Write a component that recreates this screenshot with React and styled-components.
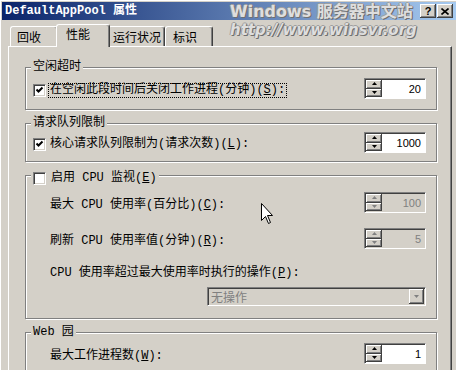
import React from 'react';
import styled, { createGlobalStyle } from 'styled-components';

const GlobalStyle = createGlobalStyle`
  html, body {
    margin: 0;
    padding: 0;
    background: #d4d0c8;
    overflow: hidden;
  }
  body {
    font-family: "Liberation Mono", "Noto Sans CJK SC", monospace;
    font-size: 12px;
    color: #000;
  }
`;

const Window = styled.div`
  position: relative;
  box-sizing: border-box;
  width: 456px;
  height: 370px;
  overflow: hidden;
  padding: 2px 0 0 2px;
  background: #d4d0c8;
  box-shadow: inset 1px 1px 0 #fff;
`;

const TitleBar = styled.div`
  display: flex;
  align-items: center;
  justify-content: space-between;
  height: 18px;
  padding: 0 3px;
  background: linear-gradient(to right, #0a246a, #a6caf0);
`;

const TitleText = styled.span`
  color: #fff;
  font-weight: bold;
  font-size: 12px;
  line-height: 14px;
`;

const TitleButtons = styled.div`
  display: flex;
  gap: 1px;
`;

const TitleButton = styled.div`
  display: flex;
  align-items: center;
  justify-content: center;
  box-sizing: border-box;
  width: 16px;
  height: 14px;
  background: #d4d0c8;
  box-shadow: inset -1px -1px 0 #404040, inset 1px 1px 0 #fff,
    inset -2px -2px 0 #808080;
  font-family: "Liberation Sans", sans-serif;
  font-weight: bold;
  font-size: 11px;
  line-height: 12px;
`;

const Body = styled.div`
  padding-left: 6px;
`;

const TabRow = styled.div`
  display: flex;
  align-items: flex-end;
  height: 22px;
  margin-top: 4px;
  padding-left: 2px;
`;

const Tab = styled.div`
  position: relative;
  z-index: ${(p) => (p.$active ? 2 : 1)};
  box-sizing: border-box;
  width: ${(p) => p.$w}px;
  height: ${(p) => (p.$active ? 23 : 20)}px;
  margin: 0 ${(p) => (p.$active ? -2 : 0)}px ${(p) => (p.$active ? -1 : 0)}px;
  padding: ${(p) => (p.$active ? '4px 0 0 9px' : '5px 0 0 ' + p.$pl + 'px')};
  background: #d4d0c8;
  border-top: 1px solid #fff;
  border-left: 1px solid #fff;
  border-right: 1px solid #404040;
  border-radius: 3px 3px 0 0;
  box-shadow: inset -1px 0 0 #808080;
  line-height: 14px;
  white-space: nowrap;
`;

const Panel = styled.div`
  box-sizing: border-box;
  display: flex;
  flex-direction: column;
  gap: 13px;
  width: 444px;
  height: 324px;
  overflow: hidden;
  padding: 20px 14px 0 16px;
  border-top: 1px solid #fff;
  border-left: 1px solid #fff;
  border-right: 1px solid #404040;
  box-shadow: inset -1px 0 0 #808080;
`;

const Group = styled.div`
  position: relative;
  flex-shrink: 0;
  box-sizing: border-box;
  height: ${(p) => p.$h}px;
  padding: ${(p) => p.$pad};
  border: 1px solid #808080;
  box-shadow: inset 1px 1px 0 #fff, 1px 1px 0 #fff;
  display: flex;
  flex-direction: ${(p) => (p.$column ? 'column' : 'row')};
  align-items: ${(p) => (p.$column ? 'stretch' : 'center')};
  justify-content: ${(p) => (p.$column ? 'flex-start' : 'space-between')};
`;

const Legend = styled.div`
  position: absolute;
  top: ${(p) => p.$top || -7}px;
  left: 5px;
  display: flex;
  align-items: center;
  gap: 5px;
  padding: 0 2px;
  background: #d4d0c8;
  line-height: 13px;
  white-space: nowrap;
`;

const CheckRow = styled.div`
  display: flex;
  align-items: center;
  gap: 3px;
  margin-top: 4px;
  white-space: nowrap;
`;

const Box = styled.span`
  display: inline-flex;
  align-items: center;
  justify-content: center;
  box-sizing: border-box;
  width: 13px;
  height: 13px;
  background: #fff;
  border: 1px solid;
  border-color: #808080 #fff #fff #808080;
  box-shadow: inset 1px 1px 0 #404040, inset -1px -1px 0 #d4d0c8;
`;

const Focus = styled.span`
  padding: 0 1px;
  outline: ${(p) => (p.$focus ? '1px dotted #000' : 'none')};
  line-height: 13px;
`;

const Row = styled.div`
  display: flex;
  align-items: center;
  justify-content: space-between;
  height: 21px;
  margin-top: ${(p) => p.$mt || 0}px;
  white-space: nowrap;
`;

const Caption = styled.div`
  margin-top: ${(p) => p.$mt || 0}px;
  line-height: 12px;
  white-space: nowrap;
`;

const Spinner = styled.div`
  display: flex;
  box-sizing: border-box;
  width: 62px;
  height: 21px;
  padding: 1px;
  border: 1px solid;
  border-color: #808080 #fff #fff #808080;
  box-shadow: inset 1px 1px 0 #404040;
  background: ${(p) => (p.$disabled ? '#d4d0c8' : '#fff')};
`;

const SpinButtons = styled.div`
  display: flex;
  flex-direction: column;
  width: 16px;
`;

const SpinButton = styled.div`
  flex: 1;
  display: flex;
  align-items: center;
  justify-content: center;
  background: #d4d0c8;
  box-shadow: inset -1px -1px 0 #404040, inset 1px 1px 0 #fff,
    inset -2px -2px 0 #808080;
`;

const SpinValue = styled.div`
  flex: 1;
  display: flex;
  align-items: center;
  justify-content: flex-end;
  padding-right: 3px;
  font-family: "Liberation Sans", sans-serif;
  font-size: 11px;
  color: ${(p) => (p.$disabled ? '#808080' : '#000')};
`;

const Select = styled.div`
  align-self: flex-end;
  display: flex;
  align-items: center;
  justify-content: space-between;
  box-sizing: border-box;
  width: 219px;
  height: 19px;
  margin-top: 8px;
  padding: 1px 1px 1px 3px;
  border: 1px solid;
  border-color: #808080 #fff #fff #808080;
  box-shadow: inset 1px 1px 0 #404040;
  background: #d4d0c8;
  color: #808080;
`;

const SelectButton = styled.div`
  display: flex;
  align-items: center;
  justify-content: center;
  width: 15px;
  height: 15px;
  background: #d4d0c8;
  box-shadow: inset -1px -1px 0 #404040, inset 1px 1px 0 #fff,
    inset -2px -2px 0 #808080;
`;

const Watermark = styled.div`
  position: absolute;
  left: 230px;
  top: 2px;
  pointer-events: none;
  color: #dedede;
  font-family: "DejaVu Sans", "Noto Sans CJK SC", sans-serif;
  font-weight: bold;
  text-shadow: 1px 1px 0 #707070, -1px 0 0 #a0a0a0, 0 -1px 0 #a0a0a0,
    1px 0 0 #808080;
  white-space: nowrap;
`;

const MarkLine = styled.div`
  font-size: ${(p) => p.$size}px;
  line-height: 19px;
  font-style: ${(p) => (p.$italic ? 'oblique' : 'normal')};
`;

const Cursor = styled.svg`
  position: absolute;
  left: 261px;
  top: 203px;
`;

const Arrow = ({ down, color = '#000' }) => (
  <svg width="7" height="4" viewBox="0 0 7 4">
    <path d={down ? 'M1 0H6L3.5 3Z' : 'M3.5 0L6 3H1Z'} fill={color} />
  </svg>
);

const Check = ({ checked }) => (
  <Box>
    {checked && (
      <svg width="9" height="9" viewBox="0 0 9 9">
        <path d="M1.5 3.5L3.5 5.5L7.5 1.5" stroke="#000" strokeWidth="2" fill="none" />
      </svg>
    )}
  </Box>
);

const Spin = ({ value, disabled }) => (
  <Spinner $disabled={disabled}>
    <SpinButtons>
      <SpinButton>
        <Arrow color={disabled ? '#808080' : '#000'} />
      </SpinButton>
      <SpinButton>
        <Arrow down color={disabled ? '#808080' : '#000'} />
      </SpinButton>
    </SpinButtons>
    <SpinValue $disabled={disabled}>{value}</SpinValue>
  </Spinner>
);

const tabs = [
  { label: '回收', w: 48, pl: 6 },
  { label: '性能', w: 54, active: true },
  { label: '运行状况', w: 57, pl: 4 },
  { label: '标识', w: 48, pl: 7 },
];

const App = () => (
  <>
    <GlobalStyle />
    <Window>
      <TitleBar>
        <TitleText>DefaultAppPool 属性</TitleText>
        <TitleButtons>
          <TitleButton>?</TitleButton>
          <TitleButton>
            <svg width="8" height="7" viewBox="0 0 8 7">
              <path d="M0.5 0.5L7.5 6.5M7.5 0.5L0.5 6.5" stroke="#000" strokeWidth="1.6" />
            </svg>
          </TitleButton>
        </TitleButtons>
      </TitleBar>

      <Body>
        <TabRow>
          {tabs.map((t) => (
            <Tab key={t.label} $w={t.w} $pl={t.pl} $active={t.active}>
              {t.label}
            </Tab>
          ))}
        </TabRow>

        <Panel>
          <Group $h={43} $pad="0 10px 0 7px">
            <Legend>空闲超时</Legend>
            <CheckRow>
              <Check checked />
              <Focus $focus>
                在空闲此段时间后关闭工作进程(分钟)(<u>S</u>):
              </Focus>
            </CheckRow>
            <Spin value="20" />
          </Group>

          <Group $h={39} $pad="0 10px 0 7px">
            <Legend>请求队列限制</Legend>
            <CheckRow>
              <Check checked />
              <Focus>核心请求队列限制为(请求次数)(<u>L</u>):</Focus>
            </CheckRow>
            <Spin value="1000" />
          </Group>

          <Group $h={144} $pad="16px 10px 0 24px" $column>
            <Legend $top={-4}>
              <Check />
              <span>
                启用 CPU 监视(<u>E</u>)
              </span>
            </Legend>
            <Row>
              <span>
                最大 CPU 使用率(百分比)(<u>C</u>):
              </span>
              <Spin value="100" disabled />
            </Row>
            <Row $mt={15}>
              <span>
                刷新 CPU 使用率值(分钟)(<u>R</u>):
              </span>
              <Spin value="5" disabled />
            </Row>
            <Caption $mt={18}>
              CPU 使用率超过最大使用率时执行的操作(<u>P</u>):
            </Caption>
            <Select>
              <span>无操作</span>
              <SelectButton>
                <Arrow down color="#808080" />
              </SelectButton>
            </Select>
          </Group>

          <Group $h={60} $pad="10px 10px 0 24px" $column>
            <Legend>Web 园</Legend>
            <Row>
              <span>
                最大工作进程数(<u>W</u>):
              </span>
              <Spin value="1" />
            </Row>
          </Group>
        </Panel>
      </Body>

      <Watermark>
        <MarkLine $size={16}>Windows 服务器中文站</MarkLine>
        <MarkLine $size={15} $italic>
          http://www.winsvr.org
        </MarkLine>
      </Watermark>

      <Cursor width="13" height="22" viewBox="0 0 13 22">
        <path
          d="M0.5 0.5V17.5L4.5 13.5L7.5 20.5L9.5 19.5L6.5 12.5H11.5Z"
          fill="#fff"
          stroke="#000"
          strokeWidth="1"
        />
      </Cursor>
    </Window>
  </>
);

export default App;
